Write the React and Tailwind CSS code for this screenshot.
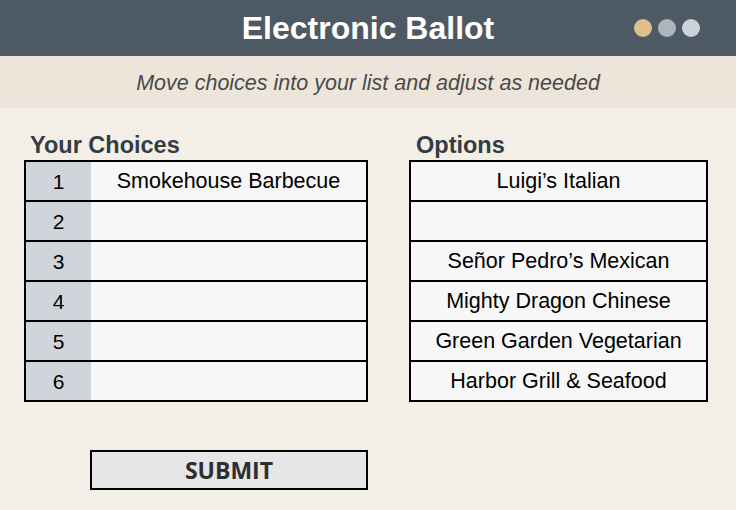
const choices = ['Smokehouse Barbecue', '', '', '', '', ''];
const options = [
  'Luigi’s Italian',
  '',
  'Señor Pedro’s Mexican',
  'Mighty Dragon Chinese',
  'Green Garden Vegetarian',
  'Harbor Grill & Seafood',
];

const sans = { fontFamily: '"Liberation Sans", Arial, sans-serif' };

export default function App() {
  return (
    <div className="w-[736px] h-[510px] bg-[#f3efe7] flex flex-col" style={sans}>
      {/* Title bar */}
      <div className="relative h-[56px] bg-[#4d5a65] flex items-center justify-center">
        <h1 className="text-[32px] font-bold text-white leading-none">Electronic Ballot</h1>
        <div className="absolute right-[36px] top-[19px] flex gap-[6px]">
          <span className="w-[18px] h-[18px] rounded-full bg-[#dfc08c]"></span>
          <span className="w-[18px] h-[18px] rounded-full bg-[#aeb6bd]"></span>
          <span className="w-[18px] h-[18px] rounded-full bg-[#cbd2d8]"></span>
        </div>
      </div>

      {/* Instructions */}
      <div className="h-[52px] bg-[#ede5da] flex items-center justify-center">
        <p className="italic text-[21.5px] text-[#4a4a4a] pt-[2px]">Move choices into your list and adjust as needed</p>
      </div>

      {/* Lists */}
      <div className="flex gap-[41px] pl-[24px] pt-[23px]">
        <div className="w-[344px] flex flex-col">
          <h2 className="text-[23.5px] font-bold text-[#333c44] leading-[29px] pl-[6px]">Your Choices</h2>
          <div className="border-2 border-black">
            {choices.map((c, i) => (
              <div key={i} className={`flex ${i > 0 ? 'h-[40px] border-t-2 border-black' : 'h-[38px]'}`}>
                <div className="w-[65px] bg-[#d0d5db] flex items-center justify-center text-[21px] text-black pt-[1px]">{i + 1}</div>
                <div className="flex-1 bg-[#f7f7f7] flex items-center justify-center text-[21.5px] text-black pt-[1px]">{c}</div>
              </div>
            ))}
          </div>
          <button className="ml-[66px] mt-[48px] h-[40px] border-2 border-black bg-[#e6e6e6] text-[23px] font-bold text-[#2e2e2e] leading-none" style={{ fontFamily: '"Open Sans", sans-serif' }}>
            SUBMIT
          </button>
        </div>

        <div className="w-[299px] flex flex-col">
          <h2 className="text-[23.5px] font-bold text-[#333c44] leading-[29px] pl-[7px]">Options</h2>
          <div className="border-2 border-black">
            {options.map((o, i) => (
              <div key={i} className={`bg-[#f7f7f7] flex items-center justify-center text-[21.5px] text-black pt-[1px] ${i > 0 ? 'h-[40px] border-t-2 border-black' : 'h-[38px]'}`}>
                {o}
              </div>
            ))}
          </div>
        </div>
      </div>
    </div>
  );
}
